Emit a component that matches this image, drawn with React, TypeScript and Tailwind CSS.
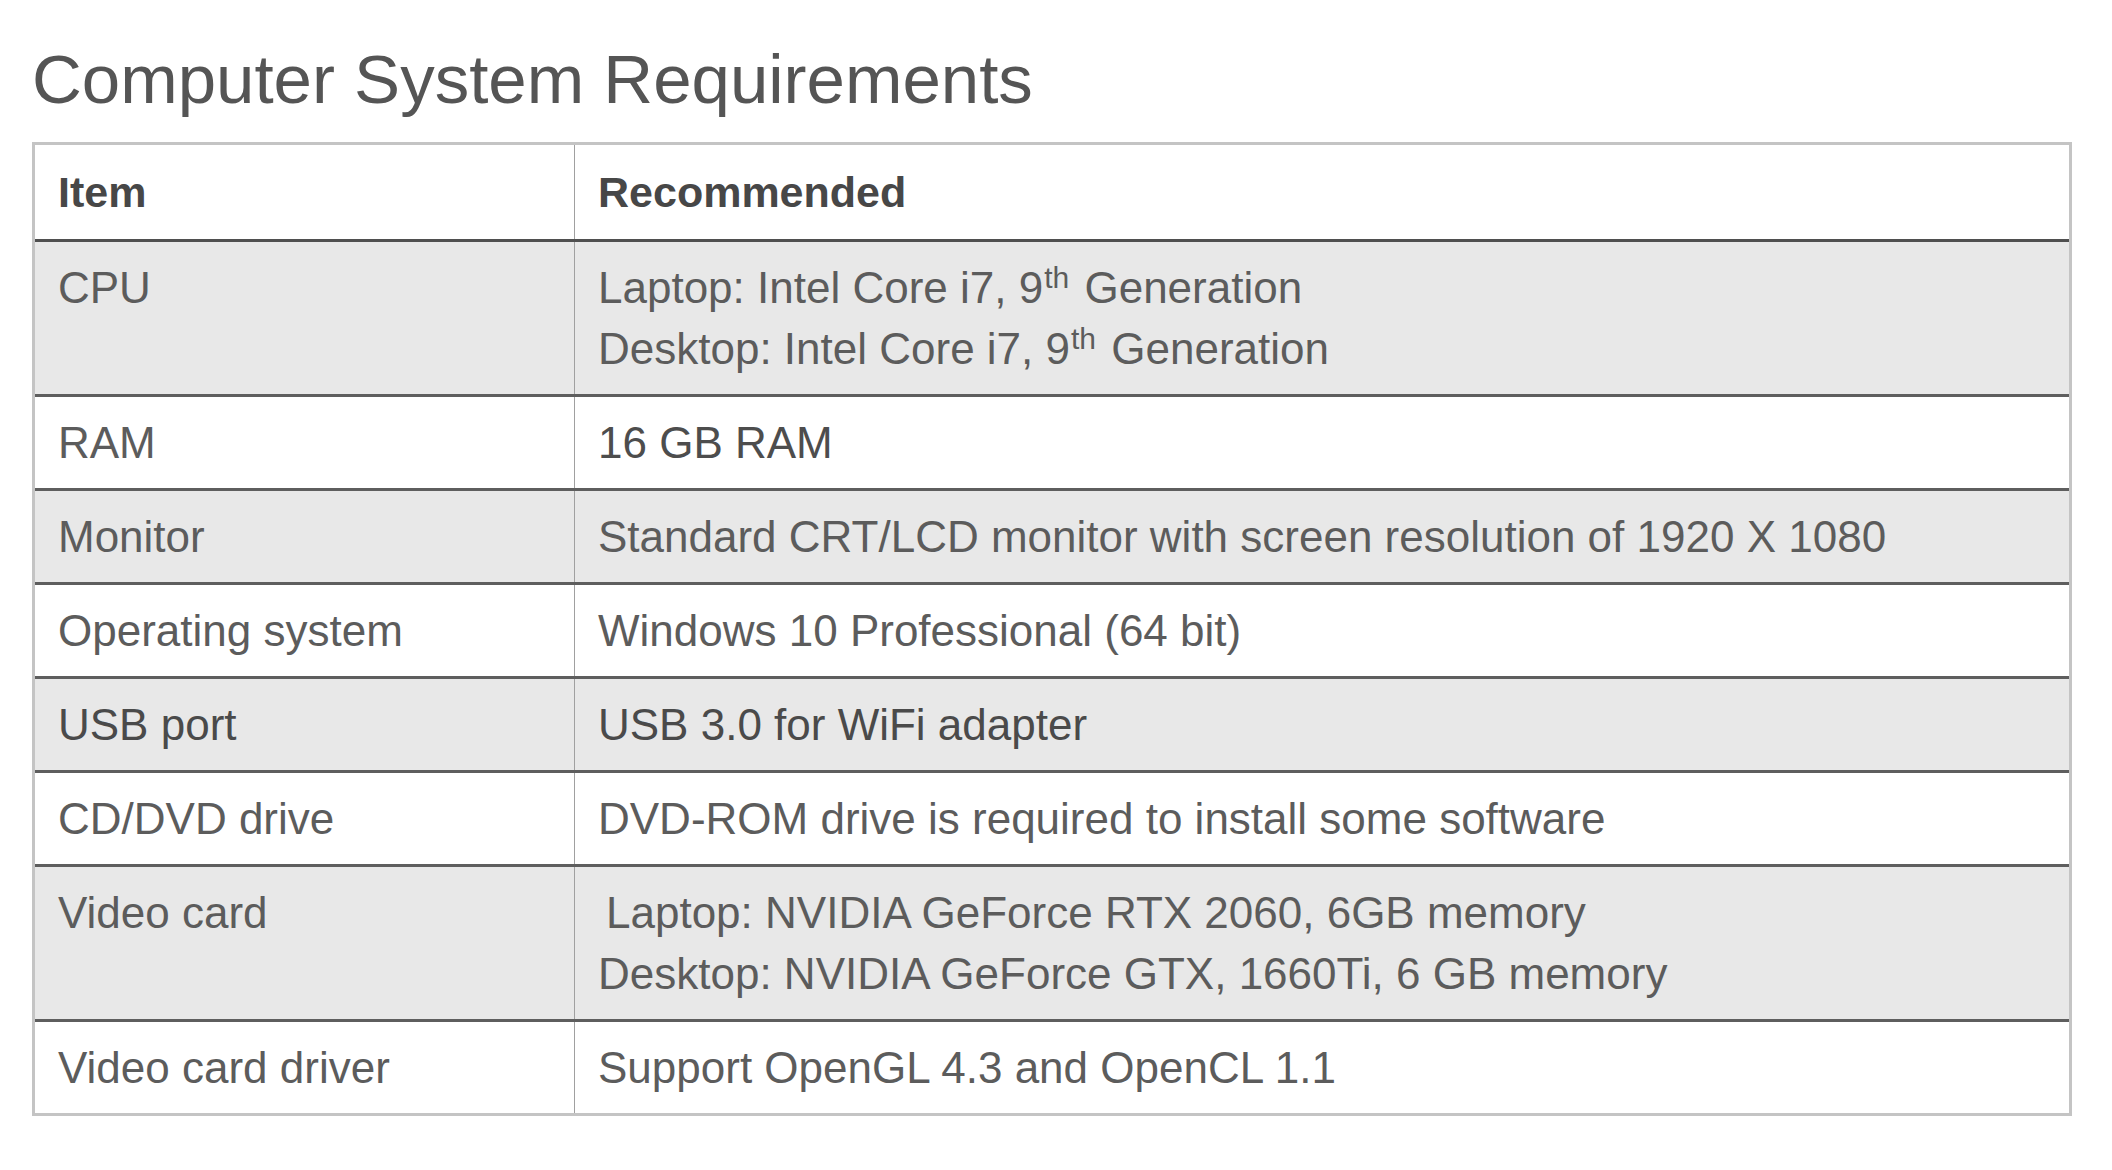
import type { ReactNode } from 'react'

type Row = {
  item: ReactNode
  value: ReactNode
  strong?: boolean
}

function Th() {
  return <sup className="text-[30px] -top-[15px] pl-[1px] pr-[3px]">th</sup>
}

const ROWS: Row[] = [
  {
    item: 'CPU',
    value: (
      <>
        <div>
          Laptop: Intel Core i7, 9<Th /> Generation
        </div>
        <div>
          Desktop: Intel Core i7, 9<Th /> Generation
        </div>
      </>
    ),
  },
  { item: 'RAM', value: <span className="text-[#4d4d4d]">16 GB RAM</span> },
  { item: 'Monitor', value: 'Standard CRT/LCD monitor with screen resolution of 1920 X 1080' },
  { item: 'Operating system', value: 'Windows 10 Professional (64 bit)' },
  { item: 'USB port', value: 'USB 3.0 for WiFi adapter', strong: true },
  { item: 'CD/DVD drive', value: 'DVD-ROM drive is required to install some software' },
  {
    item: 'Video card',
    value: (
      <>
        <div className="pl-[8px]">Laptop: NVIDIA GeForce RTX 2060, 6GB memory</div>
        <div>Desktop: NVIDIA GeForce GTX, 1660Ti, 6 GB memory</div>
      </>
    ),
  },
  { item: 'Video card driver', value: 'Support OpenGL 4.3 and OpenCL 1.1' },
]

export default function App() {
  return (
    <div
      className="min-h-screen bg-white pl-8 pr-10 pt-[45px] text-[#5c5c5c]"
      style={{ fontFamily: '"Liberation Sans", Arial, sans-serif' }}
    >
      <h1 className="text-[69px] leading-none font-normal text-[#555]">Computer System Requirements</h1>

      <div className="mt-[28px] border-[3px] border-[#c4c4c4]">
        <div className="grid grid-cols-[540px_1fr] border-b-[3px] border-[#4f4f4f] bg-white text-[43px] leading-[61px] font-bold text-[#474747]">
          <div className="border-r border-[#a0a0a0] pl-[23px] pr-5 pt-[17px] pb-[16px]">Item</div>
          <div className="pl-[23px] pr-5 pt-[17px] pb-[16px]">Recommended</div>
        </div>

        {ROWS.map((row, i) => (
          <div
            key={i}
            className={`grid grid-cols-[540px_1fr] text-[44px] leading-[61px] ${
              i % 2 === 0 ? 'bg-[#e8e8e8]' : 'bg-white'
            } ${i < ROWS.length - 1 ? 'border-b-[3px] border-[#5e5e5e]' : ''} ${
              row.strong ? 'text-[#4a4a4a]' : ''
            }`}
          >
            <div className="border-r border-[#a0a0a0] pl-[23px] pr-5 py-[15px]">{row.item}</div>
            <div className="pl-[23px] pr-5 py-[15px] whitespace-nowrap">{row.value}</div>
          </div>
        ))}
      </div>
    </div>
  )
}
